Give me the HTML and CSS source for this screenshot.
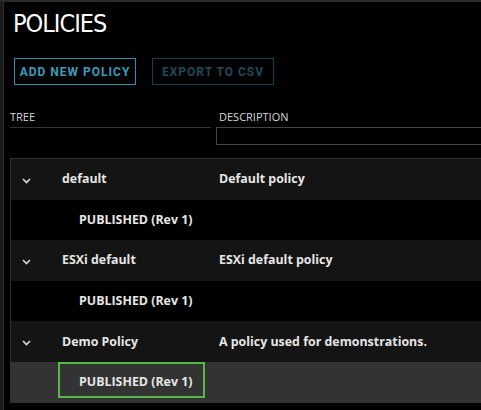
FILE: index.html
```html
<!DOCTYPE html>
<html lang="en">
<head>
  <meta charset="UTF-8" />
  <meta name="viewport" content="width=device-width, initial-scale=1.0"/>
  <title>Policies</title>
  <link rel="stylesheet" href="styles.css">
</head>
<body>
  <div class="app">
    <!-- left rail -->
    <aside class="rail"></aside>

    <main class="content">
      <h1 class="title">POLICIES</h1>

      <div class="actions">
        <button class="btn btn-primary">ADD NEW POLICY</button>
        <button class="btn btn-disabled" disabled>EXPORT TO CSV</button>
      </div>

      <!-- column filters -->
      <div class="filters">
        <div class="filter filter-tree">
          <label>TREE</label>
        </div>
        <div class="filter filter-desc">
          <label>DESCRIPTION</label>
          <input type="text" />
        </div>
      </div>

      <!-- policy tree -->
      <div class="table">
        <div class="row row-parent">
          <div class="cell-tree">
            <span class="toggle">
              <svg width="9" height="6" viewBox="0 0 9 6"><polyline points="1,1 4.5,4.5 8,1" /></svg>
            </span>
            <span class="name">default</span>
          </div>
          <div class="cell-desc">Default policy</div>
        </div>
        <div class="row row-child">
          <div class="cell-tree"><span class="rev">PUBLISHED (Rev 1)</span></div>
          <div class="cell-desc"></div>
        </div>

        <div class="row row-parent">
          <div class="cell-tree">
            <span class="toggle">
              <svg width="9" height="6" viewBox="0 0 9 6"><polyline points="1,1 4.5,4.5 8,1" /></svg>
            </span>
            <span class="name">ESXi default</span>
          </div>
          <div class="cell-desc">ESXi default policy</div>
        </div>
        <div class="row row-child">
          <div class="cell-tree"><span class="rev">PUBLISHED (Rev 1)</span></div>
          <div class="cell-desc"></div>
        </div>

        <div class="row row-parent">
          <div class="cell-tree">
            <span class="toggle">
              <svg width="9" height="6" viewBox="0 0 9 6"><polyline points="1,1 4.5,4.5 8,1" /></svg>
            </span>
            <span class="name">Demo Policy</span>
          </div>
          <div class="cell-desc">A policy used for demonstrations.</div>
        </div>
        <div class="row row-child selected">
          <div class="cell-tree"><span class="rev">PUBLISHED (Rev 1)</span></div>
          <div class="cell-desc"></div>
        </div>
      </div>
    </main>
  </div>
</body>
</html>
```

FILE: styles.css
```css
html, body {
  margin: 0;
  padding: 0;
  height: 100%;
  background: #000;
  overflow: hidden;
}

.app {
  display: flex;
  height: 100%;
  border-top: 2px solid #2b2b2b;
  box-sizing: border-box;
}

.rail {
  width: 3px;
  flex-shrink: 0;
  background: #1a1a1a;
  border-right: 1px solid #303030;
}

.content {
  flex: 1;
  min-width: 0;
  padding-left: 6px;
  font-family: "Open Sans", sans-serif;
  color: #e6e6e6;
}

.title {
  margin: 7px 0 0 0;
  padding-left: 3px;
  font-family: "DejaVu Sans Condensed", "DejaVu Sans", sans-serif;
  font-stretch: condensed;
  font-weight: normal;
  font-size: 25px;
  line-height: 30px;
  letter-spacing: -1px;
  color: #fff;
}

.actions {
  display: flex;
  gap: 16px;
  margin: 19px 0 0 4px;
}

.btn {
  height: 27px;
  width: 122px;
  padding: 0;
  background: transparent;
  font-family: Roboto, sans-serif;
  font-weight: bold;
  font-size: 12px;
  letter-spacing: 1px;
}

.btn-primary {
  border: 1px solid #2f8eab;
  color: #3a9cbc;
}

.btn-disabled {
  border: 1px solid #173f4b;
  color: #1c4b59;
}

.filters {
  display: flex;
  gap: 5px;
  margin-top: 25px;
  font-size: 11px;
  line-height: 14px;
  color: #d6d6d6;
}

.filter label {
  display: block;
}

.filter-tree {
  width: 201px;
  flex-shrink: 0;
}

.filter-tree label {
  padding-bottom: 3px;
  border-bottom: 1px solid #333;
}

.filter-desc {
  flex: 1;
}

.filter-desc label {
  padding-left: 3px;
  margin-bottom: 3px;
}

.filter-desc input {
  display: block;
  box-sizing: border-box;
  width: 100%;
  height: 18px;
  background: #000;
  border: 1px solid #444;
  border-right: none;
  outline: none;
}

.table {
  margin-top: 13px;
  border-top: 1px solid #303030;
  border-left: 1px solid #303030;
  font-weight: bold;
  font-size: 12.4px;
  line-height: 16px;
}

.row {
  display: flex;
  height: 40.6px;
}

.row-parent {
  background: #141414;
  align-items: center;
}

.row-child {
  background: #000;
}

.row-child.selected {
  background: #333;
}

.cell-tree {
  width: 208px;
  flex-shrink: 0;
  display: flex;
  align-items: center;
}

.toggle {
  width: 51px;
  display: flex;
  justify-content: center;
  padding: 3px 21px 0 0;
  box-sizing: border-box;
}

.toggle polyline {
  fill: none;
  stroke: #d8d8d8;
  stroke-width: 1.7;
}

.row-child .cell-tree {
  align-items: flex-start;
}

.rev {
  margin-left: 47px;
  width: 147px;
  height: 36px;
  box-sizing: border-box;
  padding: 10px 0 0 19px;
  border: 2px solid transparent;
}

.selected .rev {
  border-color: #55b947;
}

.cell-desc {
  flex: 1;
}
```
